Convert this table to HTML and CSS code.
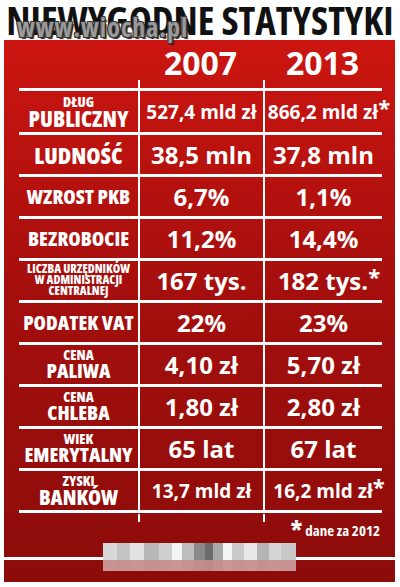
FILE: index.html
```html
<!DOCTYPE html>
<html lang="pl">
<head>
    <meta charset="UTF-8">
    <meta name="viewport" content="width=device-width, initial-scale=1.0">
    <title>Niewygodne statystyki</title>
    <link rel="stylesheet" href="styles.css">
</head>
<body>
    <div class="header">
        <h1 class="title">NIEWYGODNE STATYSTYKI</h1>
        <span class="watermark">www.wiocha.pl</span>
    </div>

    <div class="panel">
        <div class="stats">
            <div class="head">
                <div></div>
                <div class="year tick">2007</div>
                <div class="year tick">2013</div>
            </div>

            <div class="row first">
                <div class="label l22"><small>DŁUG</small>PUBLICZNY</div>
                <div class="val sm">527,4 mld zł</div>
                <div class="val sm">866,2 mld zł<span class="star">*</span></div>
            </div>
            <div class="row">
                <div class="label l23">LUDNOŚĆ</div>
                <div class="val">38,5 mln</div>
                <div class="val">37,8 mln</div>
            </div>
            <div class="row">
                <div class="label">WZROST PKB</div>
                <div class="val">6,7%</div>
                <div class="val">1,1%</div>
            </div>
            <div class="row">
                <div class="label">BEZROBOCIE</div>
                <div class="val">11,2%</div>
                <div class="val">14,4%</div>
            </div>
            <div class="row">
                <div class="label tiny">LICZBA URZĘDNIKÓW<br>W ADMINISTRACJI<br>CENTRALNEJ</div>
                <div class="val">167 tys.</div>
                <div class="val">182 tys.<span class="star">*</span></div>
            </div>
            <div class="row">
                <div class="label">PODATEK VAT</div>
                <div class="val">22%</div>
                <div class="val">23%</div>
            </div>
            <div class="row">
                <div class="label"><small>CENA</small>PALIWA</div>
                <div class="val">4,10 zł</div>
                <div class="val">5,70 zł</div>
            </div>
            <div class="row">
                <div class="label"><small>CENA</small>CHLEBA</div>
                <div class="val">1,80 zł</div>
                <div class="val">2,80 zł</div>
            </div>
            <div class="row">
                <div class="label"><small>WIEK</small>EMERYTALNY</div>
                <div class="val">65 lat</div>
                <div class="val">67 lat</div>
            </div>
            <div class="row last">
                <div class="label l21"><small>ZYSKI</small>BANKÓW</div>
                <div class="val sm">13,7 mld zł</div>
                <div class="val sm">16,2 mld zł<span class="star">*</span></div>
            </div>

            <div class="foot">
                <div></div>
                <div class="tick"></div>
                <div class="tick"></div>
            </div>
            <div class="note"><span class="note-star">*</span> dane za 2012</div>
        </div>

        <div class="bottom">
            <div class="rule"></div>
            <div class="censor"></div>
        </div>
    </div>
</body>
</html>
```
FILE: styles.css
```css
body { margin: 0; background: #fff; font-family: "Open Sans", "Liberation Sans", sans-serif; font-weight: 700; color: #fff; }

.header { position: relative; height: 40px; }
.title { margin: 0; font-size: 39px; line-height: 39px; font-weight: 700; font-stretch: 75%; text-align: center; color: #111; white-space: nowrap; }
.watermark { position: absolute; left: 17px; top: 14px; font-size: 26px; line-height: 26px; font-stretch: 75%; color: #9a9a9a; letter-spacing: 1px;
    text-shadow: 1px 1px 0 #333, -1px -1px 0 #333, 1px -1px 0 #333, -1px 1px 0 #333, 2px 2px 1px #222; }

.panel { width: 391px; margin-left: 4px; background: linear-gradient(#cc1510, #a50f0d 45%, #8c0c0a); }
.stats { padding: 0 13px 0 15px; font-stretch: 87.5%; }

.head, .row, .foot { display: grid; grid-template-columns: 119px 125px 119px; }
.head { height: 48px; padding-top: 7px; box-sizing: border-box; }
.year { font-size: 32px; line-height: 32px; font-stretch: 100%; text-align: center; }
.tick { background: linear-gradient(#fff, #fff) left bottom / 2px 8px no-repeat; }

.row { height: 42px; border-top: 3px solid #fff; box-sizing: border-box; }
.row.first { height: 44px; }
.row.last { height: 45px; border-bottom: 3px solid #fff; }
.label { display: flex; flex-direction: column; align-items: center; justify-content: center; text-align: center; font-size: 20px; line-height: 20px; font-weight: 800; white-space: nowrap; }
.label small { font-size: 14px; line-height: 12px; }
.label.l21 { font-size: 21px; }
.label.l22 { font-size: 22px; }
.label.l23 { font-size: 23px; }
.label.tiny { display: block; padding-top: 2px; font-size: 12px; line-height: 11px; }
.val { display: flex; align-items: center; justify-content: center; border-left: 2px solid #fff; font-size: 24px; font-stretch: 95%; white-space: nowrap; }
.val.sm { font-size: 19px; }
.star { font-size: 22px; line-height: 22px; margin-right: -11px; margin-bottom: 10px; }

.foot { height: 9px; }
.note { text-align: right; padding-right: 2px; font-size: 15px; line-height: 16px; }
.note-star { font-size: 27px; line-height: 16px; vertical-align: top; }

.bottom { position: relative; height: 44px; padding-top: 19px; box-sizing: border-box; }
.rule { height: 3px; background: #fff; }
.censor { position: absolute; left: 99px; top: 5px; width: 193px; height: 28px;
    background:
        linear-gradient(transparent 0 62%, rgba(200, 140, 140, 0.9) 62% 100%),
        linear-gradient(90deg, #d8d8d8 0 7%, #c4c4c4 7% 14%, #e2e2e2 14% 21%, #b8b8b8 21% 29%, #cfcfcf 29% 36%, #f4f4f4 36% 41%, #bdbdbd 41% 47%, #8a8a8a 47% 53%, #6c6c6c 53% 57%, #a9a9a9 57% 62%, #f5f5f5 62% 67%, #cacaca 67% 73%, #e8e8e8 73% 80%, #b4b4b4 80% 86%, #d6d6d6 86% 92%, #c8c8c8 92% 100%); }
```
